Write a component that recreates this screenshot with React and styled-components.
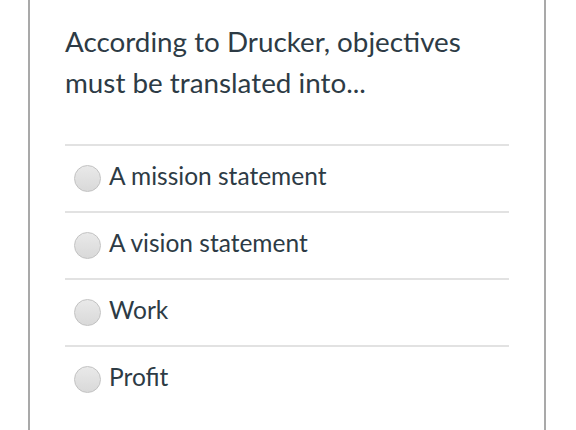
import React from 'react';
import styled, { createGlobalStyle } from 'styled-components';

const GlobalStyle = createGlobalStyle`
  html, body {
    margin: 0;
    padding: 0;
    background: #ffffff;
  }
  body {
    font-family: Lato, "Open Sans", sans-serif;
    color: #2d3b45;
  }
`;

const Page = styled.div`
  width: 576px;
  height: 430px;
  overflow: hidden;
  padding-left: 28px;
  box-sizing: border-box;
`;

const Card = styled.div`
  width: 518px;
  height: 430px;
  box-sizing: border-box;
  border-left: 2px solid #a9a9a9;
  border-right: 2px solid #a9a9a9;
  padding: 21px 35px 0 35px;
`;

const Question = styled.div`
  font-size: 27.8px;
  line-height: 41px;
  margin-bottom: 41px;
`;

const Answers = styled.div`
  display: flex;
  flex-direction: column;
`;

const Row = styled.label`
  display: flex;
  align-items: center;
  gap: 8px;
  height: 67px;
  box-sizing: border-box;
  border-top: 2px solid #e2e2e2;
  padding-left: 9px;
  font-size: 24.5px;
`;

const Radio = styled.span`
  width: 27px;
  height: 27px;
  border-radius: 50%;
  box-sizing: border-box;
  border: 1px solid #c2c2c2;
  background: linear-gradient(#e9e9e9, #d9d9d9);
  flex-shrink: 0;
`;

const Text = styled.span`
  margin-bottom: 6px;
`;

const answers = ['A mission statement', 'A vision statement', 'Work', 'Profit'];

export default function App() {
  return (
    <>
      <GlobalStyle />
      <Page>
        <Card>
          <Question>
            According to Drucker, objectives
            <br />
            must be translated into...
          </Question>
          <Answers>
            {answers.map((a) => (
              <Row key={a}>
                <Radio />
                <Text>{a}</Text>
              </Row>
            ))}
          </Answers>
        </Card>
      </Page>
    </>
  );
}
